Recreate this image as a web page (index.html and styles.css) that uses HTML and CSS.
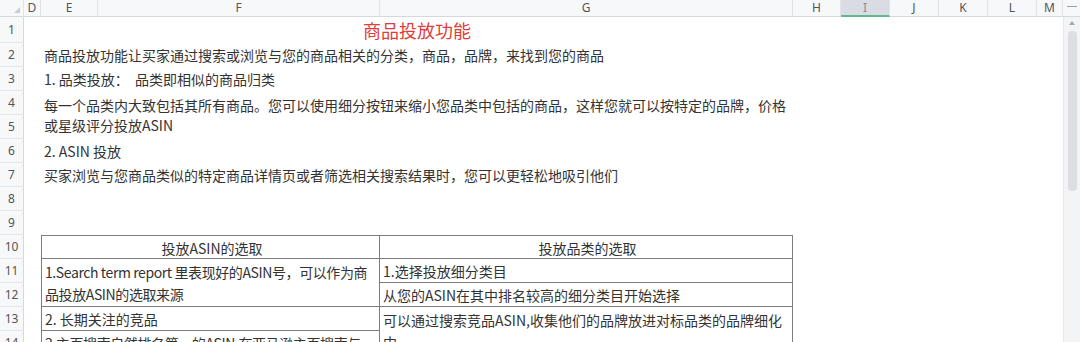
FILE: index.html
```html
<!DOCTYPE html>
<html lang="zh-CN">
<head>
    <meta charset="UTF-8">
    <title>商品投放功能</title>
    <link rel="stylesheet" href="styles.css">
</head>
<body>
    <div class="window">
        <div class="sheet">
            <!-- column headers -->
            <div class="col-head corner"><span class="corner-mark"></span></div>
            <div class="col-head">D</div>
            <div class="col-head">E</div>
            <div class="col-head">F</div>
            <div class="col-head">G</div>
            <div class="col-head">H</div>
            <div class="col-head selected">I</div>
            <div class="col-head">J</div>
            <div class="col-head">K</div>
            <div class="col-head">L</div>
            <div class="col-head">M</div>

            <div class="row-head">1</div>
            <div class="cell span-efg title">商品投放功能</div>

            <div class="row-head">2</div>
            <div class="cell span-wide">商品投放功能让买家通过搜索或浏览与您的商品相关的分类，商品，品牌，来找到您的商品</div>

            <div class="row-head">3</div>
            <div class="cell span-wide">1. 品类投放：&nbsp; 品类即相似的商品归类</div>

            <div class="row-head">4</div>
            <div class="cell span-efg rows-2">每一个品类内大致包括其所有商品。您可以使用细分按钮来缩小您品类中包括的商品，这样您就可以按特定的品牌，价格<br>或星级评分投放ASIN</div>

            <div class="row-head">5</div>

            <div class="row-head">6</div>
            <div class="cell span-wide">2. ASIN 投放</div>

            <div class="row-head">7</div>
            <div class="cell span-wide">买家浏览与您商品类似的特定商品详情页或者筛选相关搜索结果时，您可以更轻松地吸引他们</div>

            <div class="row-head">8</div>
            <div class="row-head">9</div>

            <div class="row-head">10</div>
            <div class="cell span-ef boxed first center">投放ASIN的选取</div>
            <div class="cell col-g boxed first center">投放品类的选取</div>

            <div class="row-head">11</div>
            <div class="cell span-ef boxed rows-2 tight">1.Search term report 里表现好的ASIN号，可以作为商<br>品投放ASIN的选取来源</div>
            <div class="cell col-g boxed">1.选择投放细分类目</div>

            <div class="row-head">12</div>
            <div class="cell col-g boxed">从您的ASIN在其中排名较高的细分类目开始选择</div>

            <div class="row-head">13</div>
            <div class="cell span-ef boxed">2. 长期关注的竞品</div>
            <div class="cell col-g boxed rows-2">可以通过搜索竞品ASIN,收集他们的品牌放进对标品类的品牌细化<br>中</div>

            <div class="row-head">14</div>
            <div class="cell span-ef boxed top tight">3.主页搜索自然排名第一的ASIN,在亚马逊主页搜索与</div>
        </div>

        <div class="scrollbar">
            <div class="split-mark"></div>
            <div class="track">
                <span class="arrow-up"></span>
                <div class="thumb"></div>
            </div>
        </div>
    </div>
</body>
</html>
```

FILE: styles.css
```css
html, body {
    margin: 0;
    padding: 0;
    height: 342px;
    overflow: hidden;
    background: white;
}
body {
    font-family: "Noto Sans CJK SC", "Noto Sans", sans-serif;
    font-size: 14px;
    color: #333;
}
.window {
    display: flex;
    width: 1080px;
    height: 342px;
}
.sheet {
    flex: 1;
    display: grid;
    grid-template-columns: 24px 17px 57px 282px 413px 48px 49px 49px 49px 49px 1fr;
    grid-template-rows: 17px 26px repeat(13, 24px);
    overflow: hidden;
}

/* headers */
.col-head {
    display: flex;
    align-items: center;
    justify-content: center;
    background: #f7f8fa;
    border-right: 1px solid #e1e3e7;
    border-bottom: 1px solid #d5d8dd;
    font-family: "Noto Sans", sans-serif;
    font-size: 12px;
    color: #555;
    line-height: 1;
}
.col-head.selected {
    background: #d9dce2;
    color: #8a8d93;
    border-bottom: 2px solid #5fb98c;
}
.corner {
    position: relative;
}
.corner-mark {
    position: absolute;
    right: 3px;
    bottom: 3px;
    width: 0;
    height: 0;
    border-left: 6px solid transparent;
    border-bottom: 6px solid #c9ccd1;
}
.row-head {
    grid-column: 1;
    display: flex;
    align-items: center;
    justify-content: center;
    background: #f7f8fa;
    border-right: 1px solid #d5d8dd;
    border-bottom: 1px solid #e4e6ea;
    font-family: "Noto Sans", sans-serif;
    font-size: 12px;
    color: #555;
}

/* cells */
.cell {
    display: flex;
    align-items: center;
    padding-left: 3px;
    line-height: 20px;
    white-space: nowrap;
}
.span-efg { grid-column: 3 / 6; }
.span-wide { grid-column: 3 / 10; }
.span-ef { grid-column: 3 / 5; }
.col-g { grid-column: 5; }
.rows-2 { grid-row: span 2; }

.title {
    justify-content: center;
    padding-left: 0;
    font-size: 18px;
    color: #de3d3a;
}
.boxed {
    border-top: 1px solid #7d7d7d;
    border-left: 1px solid #7d7d7d;
    border-right: 1px solid #7d7d7d;
    margin-top: -1px;
    line-height: 22px;
    overflow: hidden;
}
.boxed.first {
    margin-top: 0;
}
.col-g.boxed {
    margin-left: -1px;
}
.tight {
    letter-spacing: -0.4px;
}
.center {
    justify-content: center;
}
.top {
    align-items: flex-start;
    padding-top: 1px;
}

/* scrollbar */
.scrollbar {
    width: 17px;
    display: flex;
    flex-direction: column;
    background: #f7f8fa;
}
.split-mark {
    height: 16px;
    border-bottom: 1px solid #d5d8dd;
    position: relative;
}
.split-mark::after {
    content: "";
    position: absolute;
    left: 4px;
    top: 6px;
    width: 10px;
    height: 1px;
    background: #9a9da3;
}
.track {
    flex: 1;
    background: #f3f4f6;
    border-left: 1px solid #e6e8eb;
    display: flex;
    flex-direction: column;
    align-items: center;
    padding-top: 4px;
}
.arrow-up {
    width: 0;
    height: 0;
    border-left: 3px solid transparent;
    border-right: 3px solid transparent;
    border-bottom: 4px solid #a8abb0;
}
.thumb {
    margin-top: 6px;
    width: 9px;
    height: 160px;
    border-radius: 4px;
    background: #dcdee2;
}
```
